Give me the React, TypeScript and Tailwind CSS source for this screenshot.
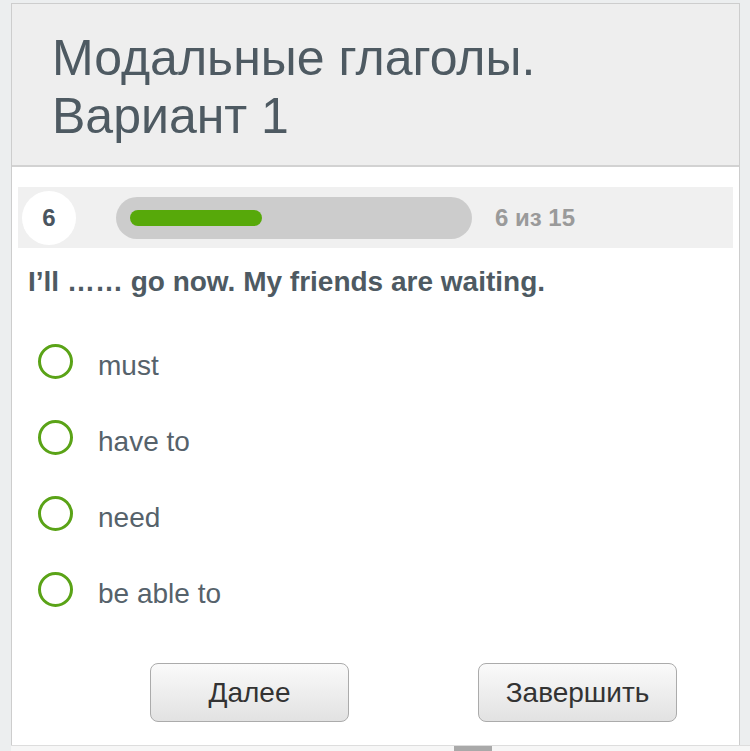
import React from "react";

const options = ["must", "have to", "need", "be able to"];

export default function App() {
  return (
    <div
      className="w-[750px] h-[751px] overflow-hidden bg-[#eceeef] flex flex-col"
      style={{ fontFamily: '"Liberation Sans", Arial, sans-serif' }}
    >
      <div className="ml-[11px] mr-[10px] mt-[3px] h-[742px] shrink-0 border-l border-r border-t border-[#cdcdcd] bg-white flex flex-col">
        <div className="h-[163px] shrink-0 bg-[#eeeeee] border-b-2 border-[#d2d2d2] pl-[40px] pt-[25px]">
          <div className="text-[50px] leading-[58px] text-[#4e5a62]">
            Модальные глаголы.
            <br />
            Вариант 1
          </div>
        </div>
        <div className="px-[6px] pt-[20px] flex flex-col">
          <div className="h-[61px] bg-[#f0f0f0] flex items-center pl-[4px]">
            <div className="w-[54px] h-[54px] rounded-full bg-white flex items-center justify-center text-[24px] font-bold text-[#4a5560]">
              6
            </div>
            <div className="ml-[40px] w-[356px] h-[42px] rounded-full bg-[#cccccc] flex items-center pl-[14px]">
              <div className="w-[132px] h-[16px] rounded-full bg-[#57a90a]" />
            </div>
            <div className="ml-[23px] text-[24px] font-bold text-[#9a9a9a]">6 из 15</div>
          </div>
          <div className="mt-[17px] pl-[10px] text-[28px] leading-[34px] font-bold text-[#4e5a62]">
            I’ll …… go now. My friends are waiting.
          </div>
          <div className="mt-[24px] flex flex-col">
            {options.map((o) => (
              <div key={o} className="h-[76px] flex items-center">
                <div className="ml-[20px] w-[35px] h-[35px] rounded-full border-[3px] border-[#5aa317] bg-white shrink-0" />
                <div className="ml-[25px] pt-[9px] text-[28px] text-[#56626b]">{o}</div>
              </div>
            ))}
          </div>
          <div className="mt-[36px] flex pl-[132px] gap-[129px]">
            {["Далее", "Завершить"].map((b) => (
              <button
                key={b}
                className="w-[199px] h-[59px] rounded-[8px] border border-[#ababab] bg-gradient-to-b from-[#fafafa] to-[#e2e2e2] text-[28px] text-[#333333] flex items-center justify-center"
                style={{ fontFamily: '"Liberation Sans", Arial, sans-serif' }}
              >
                {b}
              </button>
            ))}
          </div>
        </div>
      </div>
      <div className="h-[6px] border-t border-[#dddddd] bg-[#f6f6f6] ml-[11px] relative">
        <div className="absolute left-[443px] top-0 w-[38px] h-[6px] bg-[#a9a9a9]" />
      </div>
    </div>
  );
}
